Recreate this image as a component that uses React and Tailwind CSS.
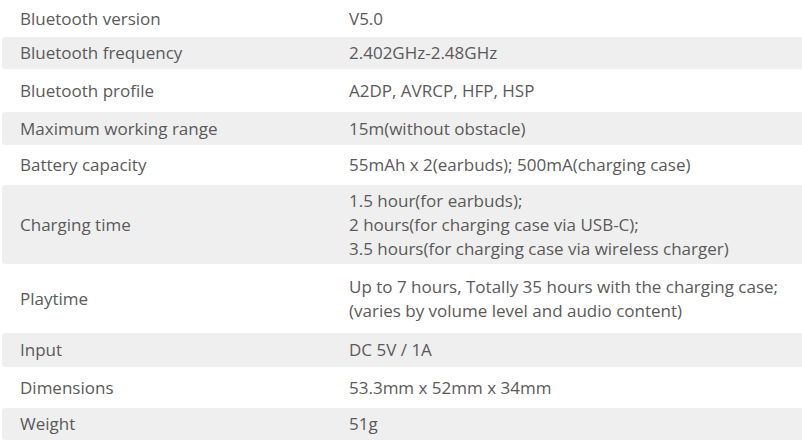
const specs = [
  { label: "Bluetooth version", value: ["V5.0"], h: "h-[37px]" },
  { label: "Bluetooth frequency", value: ["2.402GHz-2.48GHz"], h: "h-[32px]" },
  { label: "Bluetooth profile", value: ["A2DP, AVRCP, HFP, HSP"], h: "h-[43px]" },
  { label: "Maximum working range", value: ["15m(without obstacle)"], h: "h-[33px]" },
  { label: "Battery capacity", value: ["55mAh x 2(earbuds); 500mA(charging case)"], h: "h-[40px]" },
  {
    label: "Charging time",
    value: [
      "1.5 hour(for earbuds);",
      "2 hours(for charging case via USB-C);",
      "3.5 hours(for charging case via wireless charger)",
    ],
    h: "h-[79px]",
  },
  {
    label: "Playtime",
    value: [
      "Up to 7 hours, Totally 35 hours with the charging case;",
      "(varies by volume level and audio content)",
    ],
    h: "h-[69px]",
  },
  { label: "Input", value: ["DC 5V / 1A"], h: "h-[34px]" },
  { label: "Dimensions", value: ["53.3mm x 52mm x 34mm"], h: "h-[41px]" },
  { label: "Weight", value: ["51g"], h: "h-[32px]" },
]

export default function App() {
  return (
    <div className="w-[802px] h-[440px] bg-white overflow-hidden text-[#5a5a5a] text-[17px] leading-[24px] font-['Open_Sans','Lato',sans-serif]">
      {specs.map((s, i) => (
        <div
          key={i}
          className={`flex items-center ${s.h} ${
            i % 2 === 1 ? "bg-[#efefef] ml-[2px] rounded-l-[3px]" : ""
          }`}
        >
          <div className={`${i % 2 === 1 ? "w-[347px] pl-[18px]" : "w-[349px] pl-[20px]"} shrink-0`}>
            {s.label}
          </div>
          <div className="flex flex-col">
            {s.value.map((v, j) => (
              <span key={j} className="whitespace-nowrap">{v}</span>
            ))}
          </div>
        </div>
      ))}
    </div>
  )
}
